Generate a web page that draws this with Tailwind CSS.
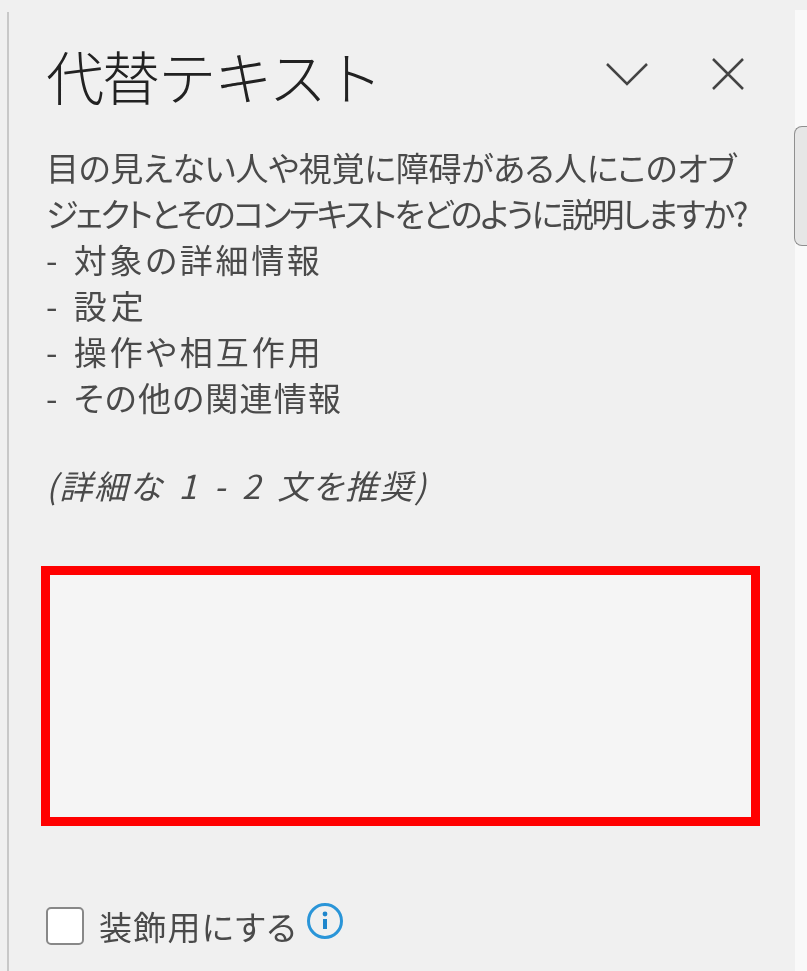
<!DOCTYPE html>
<html lang="ja"><head><meta charset="utf-8"><script src="https://cdn.jsdelivr.net/npm/@tailwindcss/browser@4"></script></head>
<body class="m-0 bg-[#f0f0f0]">
<div class="relative w-[807px] h-[971px] overflow-hidden bg-[#f0f0f0] text-[#4a4a4a] font-['Noto_Sans_CJK_JP',sans-serif]">
<div class="absolute left-[7px] top-[12px] bottom-0 w-[2px] bg-[#c8c8c8]"></div>
<div class="absolute right-0 top-[10px] bottom-0 w-[12px] bg-[#f9f9f9]"></div>
<div class="absolute right-0 top-[126px] w-[13px] h-[120px] bg-[#e6e6e6] border border-r-0 border-[#8f8f8f] rounded-l-[8px]"></div>
<div class="flex flex-col h-full pl-[46px] pr-[47px] blur-[0.5px]">
<div class="flex items-center justify-between h-[62px] mt-[44px]">
<h1 class="text-[58px] leading-[62px] font-light text-[#222] tracking-[-1.9px] whitespace-nowrap">代替テキスト</h1>
<div class="flex items-center gap-[62px] pr-[15px] -mt-[2px]">
<svg class="w-[44px] h-[26px]" viewBox="0 0 44 26" fill="none" stroke="#444" stroke-width="2.5"><path d="M2 3l20 20 20-20"/></svg>
<svg class="w-[34px] h-[34px]" viewBox="0 0 34 34" fill="none" stroke="#444" stroke-width="2.5"><path d="M2 2l30 30M32 2L2 32"/></svg>
</div>
</div>
<div class="mt-[38px] text-[33px] leading-[46px] whitespace-nowrap [font-feature-settings:'palt']">
<p class="tracking-[-0.3px]">目の見えない人や視覚に障碍がある人にこのオブ</p>
<p class="tracking-[-2.4px]">ジェクトとそのコンテキストをどのように説明しますか?</p>
<p class="tracking-[2.7px] [word-spacing:3.6px]">- 対象の詳細情報</p>
<p class="tracking-[4px] [word-spacing:1px]">- 設定</p>
<p class="tracking-[3px] [word-spacing:3px]">- 操作や相互作用</p>
<p class="tracking-[1.25px] [word-spacing:6.5px]">- その他の関連情報</p>
<p class="mt-[42px] italic tracking-[2px] [word-spacing:5.5px]">(詳細な 1 - 2 文を推奨)</p>
</div>
<div class="mt-[58px] -ml-[5px] w-[719px] h-[260px] border-[9px] border-[#ff0000] bg-[#f5f5f5]"></div>
<div class="mt-[78px] flex items-center">
<div class="w-[38px] h-[38px] bg-white border-2 border-[#888] rounded-[5px]"></div>
<span class="ml-[15px] text-[33px] leading-[44px] tracking-[1.3px] [font-feature-settings:'palt']">装飾用にする</span>
<svg class="ml-[9px] -mt-[10px] w-[38px] h-[38px]" viewBox="0 0 38 38" fill="none"><circle cx="19" cy="19" r="16.5" stroke="#2a95d8" stroke-width="3"/><circle cx="19" cy="12" r="2.4" fill="#1f86cc"/><path d="M19 17v10" stroke="#1f86cc" stroke-width="4"/></svg>
</div>
</div>
</div>
</body></html>
